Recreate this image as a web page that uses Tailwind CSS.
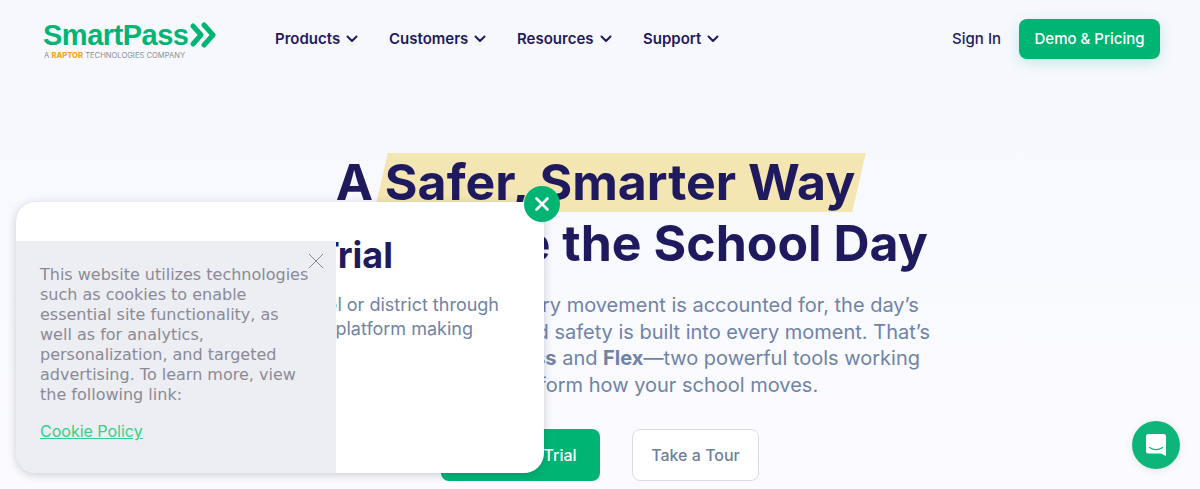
<!DOCTYPE html>
<html lang="en">
<head>
    <meta charset="UTF-8">
    <meta name="viewport" content="width=device-width, initial-scale=1.0">
    <title>SmartPass</title>
    <script src="https://cdn.jsdelivr.net/npm/@tailwindcss/browser@4"></script>
</head>
<body class="relative h-[489px] overflow-hidden bg-gradient-to-b from-[#f6f8fe] to-[#fbfbff] font-[Inter,sans-serif] text-[#1f1a5e]">

    <!-- Navigation Bar -->
    <header class="flex items-center h-[78px] pl-[43px] pr-[40px]">
        <div class="w-[232px] shrink-0 pt-[3px]">
            <div class="flex items-center h-[26px]">
                <span class="font-['Liberation_Sans',sans-serif] font-bold text-[29px] leading-[26px] text-[#00b574] tracking-[-0.5px]">SmartPass</span>
                <svg class="w-[30px] h-[26px]" viewBox="0 0 30 26" fill="none" stroke="#00b574" stroke-width="5" stroke-linecap="round" stroke-linejoin="round">
                    <path d="M5 4l8 9-8 9"/>
                    <path d="M16 3l9 10-9 10"/>
                </svg>
            </div>
            <p class="mt-[3px] ml-[1px] text-[7.600px] leading-[9px] text-[#8b8f9a] whitespace-nowrap">A <b class="text-[#f5a623] font-extrabold">RAPTOR</b> TECHNOLOGIES COMPANY</p>
        </div>
        <nav class="flex text-[15px] font-semibold">
            <a href="#" class="flex items-center gap-[6px] w-[114px]">Products
                <svg class="w-[12px] h-[8px]" viewBox="0 0 12 8" fill="none" stroke="currentColor" stroke-width="2" stroke-linecap="round" stroke-linejoin="round"><path d="M1.500 1.500L6 6l4.500-4.500"/></svg>
            </a>
            <a href="#" class="flex items-center gap-[6px] w-[128px]">Customers
                <svg class="w-[12px] h-[8px]" viewBox="0 0 12 8" fill="none" stroke="currentColor" stroke-width="2" stroke-linecap="round" stroke-linejoin="round"><path d="M1.500 1.500L6 6l4.500-4.500"/></svg>
            </a>
            <a href="#" class="flex items-center gap-[6px] w-[126px]">Resources
                <svg class="w-[12px] h-[8px]" viewBox="0 0 12 8" fill="none" stroke="currentColor" stroke-width="2" stroke-linecap="round" stroke-linejoin="round"><path d="M1.500 1.500L6 6l4.500-4.500"/></svg>
            </a>
            <a href="#" class="flex items-center gap-[6px]">Support
                <svg class="w-[12px] h-[8px]" viewBox="0 0 12 8" fill="none" stroke="currentColor" stroke-width="2" stroke-linecap="round" stroke-linejoin="round"><path d="M1.500 1.500L6 6l4.500-4.500"/></svg>
            </a>
        </nav>
        <div class="ml-auto flex items-center gap-[18px]">
            <a href="#" class="text-[15px] font-medium">Sign In</a>
            <a href="#" class="flex items-center justify-center w-[141px] h-[40px] rounded-[8px] bg-[#00b574] text-white text-[15px] font-medium shadow-[0_4px_14px_rgba(0,181,116,0.2)]">Demo &amp; Pricing</a>
        </div>
    </header>

    <!-- Hero -->
    <main class="flex flex-col items-center pt-[74px]">
        <h1 class="text-center text-[50px] leading-[61px] font-bold whitespace-nowrap">
            A <span class="relative inline-block pl-[5px] pr-[3px] -ml-[5px] mr-[6px]"><span class="absolute left-[1px] -right-[1px] top-[1px] h-[59px] bg-[#f4e6b3] skew-x-[-13deg]"></span><span class="relative">Safer, Smarter Way</span></span><br>
            to Navigate the School Day
        </h1>
        <p class="mt-[18px] w-[700px] text-center text-[20px] leading-[26.600px] text-[#6f83a6] whitespace-nowrap">
            In a great school where every movement is accounted for, the day’s<br>
            <span class="tracking-[0.2px]">flow of the day improves</span> and safety is built into every moment. That’s<br>
            why we designed <b>SmartPass</b> and <b>Flex</b>—two powerful tools working<br>
            together to transform how your school moves.
        </p>
        <div class="mt-[31px] flex gap-[32px] text-[16px] font-medium">
            <a href="#" class="flex items-center justify-center w-[159px] h-[52px] rounded-[8px] bg-[#00b574] text-white">Start Free Trial</a>
            <a href="#" class="flex items-center justify-center w-[127px] h-[52px] rounded-[8px] bg-white border border-[#d8dce8] text-[#6f7f9c]">Take a Tour</a>
        </div>
    </main>

    <!-- Promo popup -->
    <div class="absolute left-[16px] top-[202px] w-[528px] h-[271px] rounded-[20px] bg-white shadow-[0_2px_10px_rgba(30,30,70,0.22)]">
        <h2 class="absolute right-[151px] top-[32px] whitespace-nowrap text-[36px] leading-[42px] font-bold">Free Trial</h2>
        <p class="absolute right-[45px] top-[91px] text-right whitespace-nowrap text-[18px] leading-[24px] text-[#6f83a6]">Your school or district through<br><span class="pr-[26px]">a single platform making</span></p>
        <button class="absolute -right-[16px] -top-[16px] flex items-center justify-center w-[36px] h-[36px] rounded-full bg-[#00b574]">
            <svg class="w-[16px] h-[16px]" viewBox="0 0 16 16" fill="none" stroke="white" stroke-width="2.600" stroke-linecap="round"><path d="M2.500 2.500l11 11M13.500 2.500l-11 11"/></svg>
        </button>

        <!-- Cookie notice -->
        <div class="absolute left-0 bottom-0 w-[320px] h-[232px] rounded-bl-[20px] bg-[#edeef3] pl-[24px] pt-[24px]">
            <p class="w-[275px] font-['DejaVu_Sans',sans-serif] text-[16px] leading-[20px] text-[#8a8a96]">This website utilizes technologies such as cookies to enable essential site functionality, as well as for analytics, personalization, and targeted advertising. To learn more, view the following link:</p>
            <a href="#" class="block mt-[16px] text-[16px] leading-[20px] text-[#2fd28c] underline">Cookie Policy</a>
            <svg class="absolute left-[292px] top-[12px] w-[16px] h-[16px]" viewBox="0 0 16 16" fill="none" stroke="#6b6b78" stroke-width="0.800"><path d="M1 1l14 14M15 1L1 15"/></svg>
        </div>
    </div>

    <!-- Chat launcher -->
    <button class="absolute left-[1132px] top-[421px] flex items-center justify-center w-[48px] h-[48px] rounded-full bg-[#0db57a] shadow-[0_2px_10px_rgba(0,0,0,0.08)]">
        <svg class="w-[22px] h-[24px]" viewBox="0 0 22 24" fill="white"><path d="M3.500 1h15A2.500 2.500 0 0 1 21 3.500V23l-5-2.500H3.500A2.500 2.500 0 0 1 1 18V3.500A2.500 2.500 0 0 1 3.500 1z"/><path d="M4.500 14.500c4 2.600 9 2.600 13 0" fill="none" stroke="#0db57a" stroke-width="1.300" stroke-linecap="round"/></svg>
    </button>

</body>
</html>
